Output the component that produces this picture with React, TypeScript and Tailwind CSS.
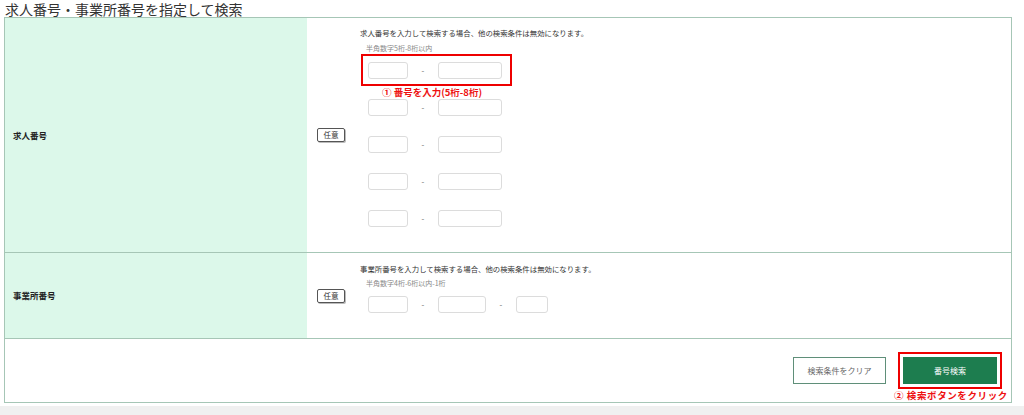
import React from 'react'

const font = { fontFamily: '"Noto Sans CJK JP", "Noto Sans", sans-serif' }

function Box({ w }: { w: string }) {
  return <div className={`${w} h-[17px] border border-[#dcdcdc] rounded-[3px] bg-white`} />
}

function Dash() {
  return <div className="w-[30px] text-center text-[8px] leading-[17px] text-[#666]">-</div>
}

function Badge() {
  return (
    <span className="inline-flex items-center justify-center w-[28px] h-[14px] border border-[#555] rounded-[2px] text-[7.5px] text-[#333] bg-white shadow-[1px_1px_0_#bbb]">
      任意
    </span>
  )
}

export default function App() {
  return (
    <div className="relative w-[1024px] h-[415px] bg-white overflow-hidden" style={font}>
      <h2 className="pl-[5px] pt-[1px] h-[17px] text-[14px] leading-[16px] text-[#333]">
        求人番号・事業所番号を指定して検索
      </h2>

      <div className="ml-[4px] w-[1008px] border border-[#a6c6b6]">
        {/* 求人番号 */}
        <div className="flex h-[235px] border-b border-[#a6c6b6]">
          <div className="w-[302px] bg-[#dcf8ea] flex items-center pl-[8px] text-[8.5px] font-bold text-[#222]">
            求人番号
          </div>
          <div className="w-[53px] flex items-center pl-[10px]">
            <Badge />
          </div>
          <div className="flex-1 pt-[9px]">
            <p className="text-[7.4px] leading-[12px] text-[#333]">
              求人番号を入力して検索する場合、他の検索条件は無効になります。
            </p>
            <p className="mt-[4px] pl-[6px] text-[7px] leading-[11px] text-[#888]">半角数字5桁-8桁以内</p>
            <div className="mt-[8px] pl-[8px] flex flex-col gap-[20px]">
              {[0, 1, 2, 3, 4].map((i) => (
                <div key={i} className="flex items-center">
                  <Box w="w-[40px]" />
                  <Dash />
                  <Box w="w-[64px]" />
                </div>
              ))}
            </div>
          </div>
        </div>

        {/* 事業所番号 */}
        <div className="flex h-[86px] border-b border-[#a6c6b6]">
          <div className="w-[302px] bg-[#dcf8ea] flex items-center pl-[8px] text-[8.5px] font-bold text-[#222]">
            事業所番号
          </div>
          <div className="w-[53px] flex items-center pl-[10px]">
            <Badge />
          </div>
          <div className="flex-1 pt-[10px]">
            <p className="text-[7.4px] leading-[12px] text-[#333]">
              事業所番号を入力して検索する場合、他の検索条件は無効になります。
            </p>
            <p className="mt-[3px] pl-[6px] text-[7px] leading-[11px] text-[#888]">半角数字4桁-6桁以内-1桁</p>
            <div className="mt-[7px] pl-[8px] flex items-center">
              <Box w="w-[40px]" />
              <Dash />
              <Box w="w-[48px]" />
              <Dash />
              <Box w="w-[32px]" />
            </div>
          </div>
        </div>

        {/* buttons */}
        <div className="flex h-[63px] items-center justify-end gap-[17px] pr-[14px]">
          <button className="w-[93px] h-[27px] border border-[#5f8f79] bg-white text-[8px] text-[#666]">
            検索条件をクリア
          </button>
          <button className="w-[94px] h-[27px] bg-[#1d7d4f] text-[8px] text-white">番号検索</button>
        </div>
      </div>

      <div className="mt-[3px] h-[10px] bg-[#f0f0f0]" />

      {/* annotations */}
      <div className="absolute left-[361px] top-[54px] w-[151px] h-[32px] border-2 border-[#ee0000]" />
      <p className="absolute left-[382px] top-[85px] text-[9.5px] leading-[14px] font-bold text-[#ee1111]">
        ① 番号を入力(5桁-8桁)
      </p>
      <div className="absolute left-[898px] top-[352px] w-[104px] h-[37px] border-2 border-[#ee0000]" />
      <p className="absolute left-[894px] top-[388px] text-[9.5px] leading-[14px] font-bold text-[#ee1111] tracking-[0.6px]">
        ② 検索ボタンをクリック
      </p>
    </div>
  )
}
